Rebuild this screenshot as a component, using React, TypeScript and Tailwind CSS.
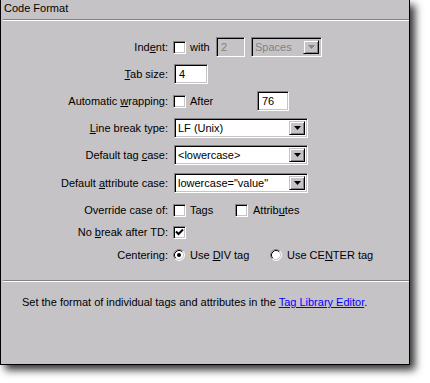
import React from "react";

const sunken =
  "border border-t-[#848284] border-l-[#848284] border-b-white border-r-white shadow-[inset_1px_1px_0_#000,inset_-1px_-1px_0_#c6c3c6]";

function U({ children }: { children: React.ReactNode }) {
  return <span className="underline underline-offset-[1px]">{children}</span>;
}

function Check({ checked = false }: { checked?: boolean }) {
  return (
    <div className={`w-[13px] h-[13px] shrink-0 bg-white flex items-center justify-center ${sunken}`}>
      {checked && (
        <svg width="9" height="9" viewBox="0 0 9 9">
          <path d="M1 3.5 L3.5 6 L8 1.5" stroke="#000" strokeWidth="2" fill="none" />
        </svg>
      )}
    </div>
  );
}

function Radio({ checked = false }: { checked?: boolean }) {
  return (
    <svg width="12" height="12" viewBox="0 0 12 12" className="shrink-0">
      <circle cx="6" cy="6" r="5" fill="#fff" />
      <path d="M2.11 9.89 A5.5 5.5 0 0 1 9.89 2.11" stroke="#848284" strokeWidth="1" fill="none" />
      <path d="M9.89 2.11 A5.5 5.5 0 0 1 2.11 9.89" stroke="#fff" strokeWidth="1" fill="none" />
      <path d="M2.82 9.18 A4.5 4.5 0 0 1 9.18 2.82" stroke="#000" strokeWidth="1" fill="none" />
      <path d="M9.18 2.82 A4.5 4.5 0 0 1 2.82 9.18" stroke="#c6c3c6" strokeWidth="1" fill="none" />
      {checked && <circle cx="6" cy="6" r="2" fill="#000" />}
    </svg>
  );
}

function Arrow({ disabled = false }: { disabled?: boolean }) {
  return (
    <div className="w-[16px] h-full shrink-0 bg-[#c6c3c6] border border-t-[#c6c3c6] border-l-[#c6c3c6] border-b-black border-r-black shadow-[inset_1px_1px_0_#fff,inset_-1px_-1px_0_#848284] flex items-center justify-center">
      <svg width="7" height="4" viewBox="0 0 7 4">
        <polygon points="0,0 7,0 3.5,4" fill={disabled ? "#848284" : "#000"} />
      </svg>
    </div>
  );
}

function Select({
  value,
  width,
  disabled = false,
}: {
  value: string;
  width: string;
  disabled?: boolean;
}) {
  return (
    <div
      className={`${width} h-[20px] flex items-stretch p-[2px] ${sunken} ${
        disabled ? "bg-[#c6c3c6] text-[#848284]" : "bg-white text-black"
      }`}
    >
      <div className="flex-1 flex items-center pl-[1px] whitespace-nowrap overflow-hidden">{value}</div>
      <Arrow disabled={disabled} />
    </div>
  );
}

function Input({
  value,
  width,
  disabled = false,
}: {
  value: string;
  width: string;
  disabled?: boolean;
}) {
  return (
    <div
      className={`${width} h-[20px] flex items-center pl-[4px] ${sunken} ${
        disabled ? "bg-[#c6c3c6] text-[#848284]" : "bg-white text-black"
      }`}
    >
      {value}
    </div>
  );
}

function Row({
  label,
  children,
  className = "",
}: {
  label: React.ReactNode;
  children: React.ReactNode;
  className?: string;
}) {
  return (
    <div className={`flex items-center h-[20px] ${className}`}>
      <div className="w-[167px] text-right whitespace-nowrap">{label}</div>
      <div className="ml-[5px] flex items-center">{children}</div>
    </div>
  );
}

export default function App() {
  return (
    <div
      className="w-[430px] h-[383px] bg-white overflow-hidden text-[11px] leading-[13px] text-black"
      style={{ fontFamily: '"Liberation Sans", Arial, sans-serif' }}
    >
      <div className="w-[410px] h-[365px] bg-[#c6c3c6] border-l border-r border-b border-black shadow-[5px_5px_8px_rgba(0,0,0,0.8)] flex flex-col">
        <div className="h-[19px] pl-[3px] pt-[2px]">Code Format</div>
        <div className="ml-[2px] h-[2px] border-t border-t-[#848284] border-b border-b-white" />

        <Row label={<>Ind<U>e</U>nt:</>} className="mt-[16px]">
          <Check />
          <span className="w-[30px] pl-[4px]">with</span>
          <Input value="2" width="w-[29px]" disabled />
          <div className="ml-[6px]">
            <Select value="Spaces" width="w-[71px]" disabled />
          </div>
        </Row>

        <Row label={<><U>T</U>ab size:</>} className="mt-[7px]">
          <div className="ml-[1px]">
            <Input value="4" width="w-[34px]" />
          </div>
        </Row>

        <Row label={<>Automatic <U>w</U>rapping:</>} className="mt-[7px]">
          <Check />
          <span className="w-[71px] pl-[4px]">After</span>
          <Input value="76" width="w-[32px]" />
        </Row>

        <Row label={<><U>L</U>ine break type:</>} className="mt-[7px]">
          <div className="ml-[1px]">
            <Select value="LF (Unix)" width="w-[134px]" />
          </div>
        </Row>

        <Row label={<>Default tag <U>c</U>ase:</>} className="mt-[7px]">
          <div className="ml-[1px]">
            <Select value="<lowercase>" width="w-[134px]" />
          </div>
        </Row>

        <Row label={<>Default <U>a</U>ttribute case:</>} className="mt-[8px]">
          <div className="ml-[1px]">
            <Select value={'lowercase="value"'} width="w-[134px]" />
          </div>
        </Row>

        <Row label="Override case of:" className="mt-[7px]">
          <Check />
          <span className="w-[49px] pl-[4px]">Tags</span>
          <Check />
          <span className="pl-[5px]">
            Attrib<U>u</U>tes
          </span>
        </Row>

        <Row label={<>No <U>b</U>reak after TD:</>} className="mt-[2px]">
          <Check checked />
        </Row>

        <Row label="Centering:" className="mt-[3px]">
          <Radio checked />
          <span className="w-[85px] pl-[5px]">
            Use <U>D</U>IV tag
          </span>
          <Radio />
          <span className="pl-[5px]">
            Use CE<U>N</U>TER tag
          </span>
        </Row>

        <div className="mt-[15px] ml-[2px] h-[2px] border-t border-t-[#848284] border-b border-b-white" />

        <div className="mt-[14px] pl-[21px] whitespace-nowrap">
          Set the format of individual tags and attributes in the{" "}
          <span className="text-[#0000ff] underline underline-offset-[1px]">Tag Library Editor</span>.
        </div>
      </div>
    </div>
  );
}
